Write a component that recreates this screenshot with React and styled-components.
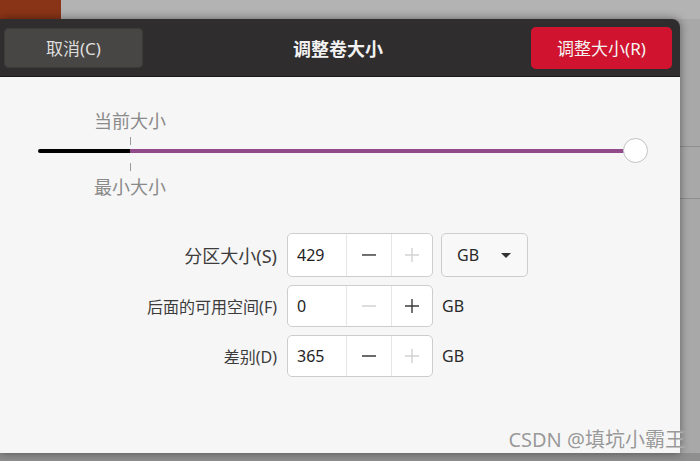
import React from "react";
import styled, { createGlobalStyle } from "styled-components";

const GlobalStyle = createGlobalStyle`
    html, body {
        margin: 0;
        padding: 0;
    }
    body {
        font-family: "Noto Sans", "Noto Sans CJK SC", sans-serif;
    }
`;

const Minus = ({ muted }) => (
    <svg width="16" height="16" viewBox="0 0 16 16">
        <line x1="1" y1="8" x2="15" y2="8" stroke={muted ? "#d2d2d2" : "#3a3a3a"} strokeWidth="1.4" />
    </svg>
);

const Plus = ({ muted }) => (
    <svg width="16" height="16" viewBox="0 0 16 16">
        <line x1="1" y1="8" x2="15" y2="8" stroke={muted ? "#d2d2d2" : "#3a3a3a"} strokeWidth="1.4" />
        <line x1="8" y1="1" x2="8" y2="15" stroke={muted ? "#d2d2d2" : "#3a3a3a"} strokeWidth="1.4" />
    </svg>
);

const rows = [
    { label: "分区大小(S)", value: "429", minusOff: false, plusOff: true, big: true, combo: true },
    { label: "后面的可用空间(F)", value: "0", minusOff: true, plusOff: false },
    { label: "差别(D)", value: "365", minusOff: false, plusOff: true },
];

const App = () => {
    return (
        <Desktop>
            <GlobalStyle />
            <TopStrip>
                <OrangeBlock />
            </TopStrip>
            <Middle>
                <Dialog>
                    <Header>
                        <CancelButton>取消(C)</CancelButton>
                        <Title>调整卷大小</Title>
                        <ResizeButton>调整大小(R)</ResizeButton>
                    </Header>
                    <Body>
                        <Slider>
                            <Track>
                                <Fill width={92} />
                                <Rest />
                            </Track>
                            <Handle />
                            <Mark>
                                <MarkLabel>当前大小</MarkLabel>
                                <Tick />
                                <TrackGap />
                                <Tick />
                                <MarkLabel>最小大小</MarkLabel>
                            </Mark>
                        </Slider>
                        <Form>
                            {rows.map((r) => (
                                <React.Fragment key={r.label}>
                                    <Label big={r.big}>{r.label}</Label>
                                    <Spin tall={r.big}>
                                        <Entry>{r.value}</Entry>
                                        <SpinButton>
                                            <Minus muted={r.minusOff} />
                                        </SpinButton>
                                        <SpinButton>
                                            <Plus muted={r.plusOff} />
                                        </SpinButton>
                                    </Spin>
                                    {r.combo ? (
                                        <Combo>
                                            <span>GB</span>
                                            <Arrow />
                                        </Combo>
                                    ) : (
                                        <Unit>GB</Unit>
                                    )}
                                </React.Fragment>
                            ))}
                        </Form>
                        <Watermark>CSDN @填坑小霸王</Watermark>
                    </Body>
                </Dialog>
                <SideStrip>
                    <SideLine />
                    <SideLine />
                </SideStrip>
            </Middle>
            <BottomStrip />
        </Desktop>
    );
};

const Desktop = styled.div`
    width: 700px;
    height: 461px;
    overflow: hidden;
    display: flex;
    flex-direction: column;
    background: #a9a9a9;
`;

const TopStrip = styled.div`
    height: 19px;
    background: #b3b3b3;
    display: flex;
`;

const OrangeBlock = styled.div`
    width: 61px;
    background: #8a3417;
`;

const Middle = styled.div`
    display: flex;
    height: 434px;
`;

const Dialog = styled.div`
    position: relative;
    z-index: 1;
    width: 680px;
    display: flex;
    flex-direction: column;
    border-radius: 0 8px 0 0;
    box-shadow: 0 0 10px rgba(0, 0, 0, 0.45);
`;

const Header = styled.div`
    height: 58px;
    box-sizing: border-box;
    background: #2f2d2d;
    border-radius: 0 8px 0 0;
    border-bottom: 1px solid #1c1b1b;
    display: grid;
    grid-template-columns: 1fr auto 1fr;
    align-items: center;
    padding: 0 8px 0 4px;
`;

const HeaderButton = styled.div`
    display: flex;
    align-items: center;
    justify-content: center;
    border-radius: 5px;
    font-size: 17px;
`;

const CancelButton = styled(HeaderButton)`
    justify-self: start;
    width: 139px;
    height: 40px;
    background: #484644;
    color: #dedede;
    box-shadow: inset 0 0 0 1px #3d3b3a;
`;

const ResizeButton = styled(HeaderButton)`
    justify-self: end;
    width: 141px;
    height: 42px;
    background: #d0142f;
    color: #f4f4f4;
`;

const Title = styled.div`
    color: #f2f2f2;
    font-size: 18px;
    font-weight: 700;
`;

const Body = styled.div`
    position: relative;
    flex: 1;
    background: #f6f6f6;
    padding-top: 28px;
`;

const Slider = styled.div`
    position: relative;
    margin-left: 38px;
    width: 598px;
    height: 92px;
`;

const Track = styled.div`
    position: absolute;
    top: 44px;
    left: 0;
    right: 0;
    height: 4px;
    display: flex;
`;

const Fill = styled.div`
    width: ${(p) => p.width}px;
    background: #000;
    border-radius: 2px 0 0 2px;
`;

const Rest = styled.div`
    flex: 1;
    background: #924b8a;
`;

const Handle = styled.div`
    position: absolute;
    top: 33px;
    right: -12px;
    width: 23px;
    height: 23px;
    border-radius: 50%;
    background: #fff;
    border: 1.5px solid #c2c2c2;
`;

const Mark = styled.div`
    position: absolute;
    top: 4px;
    left: 92px;
    transform: translateX(-50%);
    display: flex;
    flex-direction: column;
    align-items: center;
`;

const MarkLabel = styled.div`
    font-size: 18px;
    line-height: 24px;
    color: #8a8a8a;
`;

const Tick = styled.div`
    width: 1px;
    height: 8px;
    margin: 4px 0;
    background: #9a9a9a;
`;

const TrackGap = styled.div`
    height: 10px;
`;

const Form = styled.div`
    margin: 36px 0 0 140px;
    display: grid;
    grid-template-columns: 137px 146px auto;
    column-gap: 10px;
    row-gap: 8px;
    align-items: center;
`;

const Label = styled.div`
    justify-self: end;
    white-space: nowrap;
    color: #3c3c3c;
    font-size: ${(p) => (p.big ? 18 : 16)}px;
`;

const Spin = styled.div`
    height: ${(p) => (p.tall ? 44 : 42)}px;
    box-sizing: border-box;
    display: grid;
    grid-template-columns: 58px 45px 1fr;
    background: #fff;
    border: 1px solid #cdcdcd;
    border-radius: 5px;
    overflow: hidden;
`;

const Entry = styled.div`
    display: flex;
    align-items: center;
    padding-left: 9px;
    font-size: 16px;
    color: #1e1e1e;
`;

const SpinButton = styled.div`
    display: flex;
    align-items: center;
    justify-content: center;
    border-left: 1px solid #e6e6e6;
`;

const Combo = styled.div`
    justify-self: start;
    margin-left: -2px;
    width: 87px;
    height: 44px;
    box-sizing: border-box;
    border: 1px solid #cdcdcd;
    border-radius: 5px;
    background: #f8f8f8;
    display: flex;
    align-items: center;
    justify-content: space-between;
    padding: 0 16px 0 15px;
    font-size: 16px;
    color: #2a2a2a;
`;

const Arrow = styled.div`
    width: 0;
    height: 0;
    border-left: 5px solid transparent;
    border-right: 5px solid transparent;
    border-top: 5px solid #333;
`;

const Unit = styled.div`
    margin-left: -1px;
    font-size: 16px;
    color: #2a2a2a;
`;

const Watermark = styled.div`
    position: absolute;
    right: -5px;
    bottom: 0;
    font-size: 20px;
    color: #999;
    text-shadow: 0 0 1px #fff;
    white-space: nowrap;
`;

const SideStrip = styled.div`
    flex: 1;
    background: #a8a8a8;
    padding-top: 127px;
    display: flex;
    flex-direction: column;
    gap: 51px;
`;

const SideLine = styled.div`
    height: 1px;
    background: #8e8e8e;
`;

const BottomStrip = styled.div`
    flex: 1;
    background: #8f8f8f;
`;

export default App;
